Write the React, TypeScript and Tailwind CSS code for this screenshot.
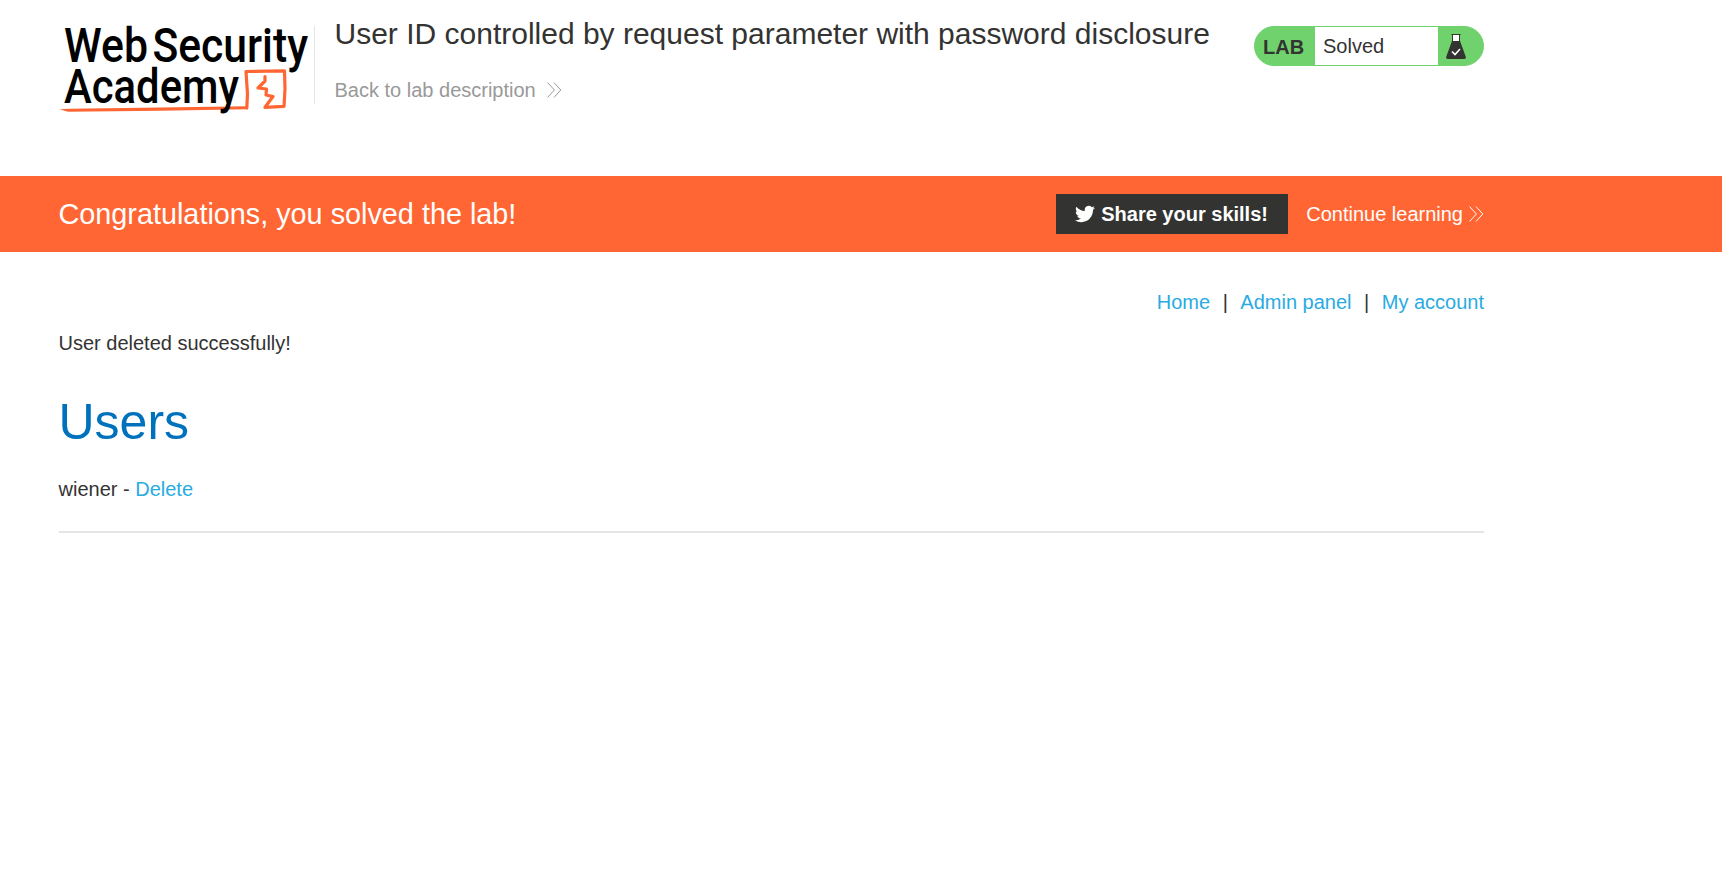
import React from "react";

function Chevrons({ className }: { className: string }) {
  return (
    <svg width="15" height="16" viewBox="0 0 15 16" fill="none" stroke="currentColor" strokeWidth="1" className={className}>
      <path d="M0.6 0.6 L7.4 8 L0.6 15.4 M7 0.6 L13.8 8 L7 15.4" />
    </svg>
  );
}

function Logo() {
  return (
    <svg width="255" height="112" viewBox="59 4 255 112" className="shrink-0" role="img">
      <g fill="#000" fontFamily="Roboto, sans-serif" fontWeight="500" fontSize="48">
        <text x="64" y="62" textLength="84" lengthAdjust="spacingAndGlyphs">Web</text>
        <text x="152.500" y="62" textLength="155.500" lengthAdjust="spacingAndGlyphs">Security</text>
      </g>
      <g fill="none" stroke="#ff6633" strokeLinejoin="round" strokeLinecap="round">
        <path d="M246.800 108 L247.500 94 L246 71.500 L284.500 70.800 L285 89 L284 106.300 L265 107.300 L273 96.500 L266 95 L266.500 89 L258 88 L265 81 L265 76.500" strokeWidth="3.200" />
      </g>
      <path d="M59.500 109.200 L70 108.700 L160 107.600 L246 106.300 L248 109.300 L160 110.800 L68 111.800 Z" fill="#ff6633" />
      <text x="64" y="103" textLength="175" lengthAdjust="spacingAndGlyphs" fill="#000" fontFamily="Roboto, sans-serif" fontWeight="500" fontSize="48">Academy</text>
    </svg>
  );
}

function Flask() {
  return (
    <svg width="20" height="26" viewBox="0 0 20 26">
      <path d="M7 1 H13 V9 H7 Z" fill="#fff" />
      <path d="M5.500 0.500 H14.500 M6.500 0.500 V8 M13.500 0.500 V8" stroke="#333332" strokeWidth="1" fill="none" />
      <path d="M6 7 H14 L19.700 22.500 Q20.300 25 18 25 H2 Q-0.300 25 0.300 22.500 Z" fill="#333332" />
      <path d="M6 17.500 L9 20.500 L14 15" stroke="#fff" strokeWidth="1.600" fill="none" />
    </svg>
  );
}

function Twitter() {
  return (
    <svg width="20" height="20" viewBox="0 0 24 24" fill="#fff">
      <path d="M23.953 4.570a10 10 0 01-2.825.775 4.958 4.958 0 002.163-2.723c-.951.555-2.005.959-3.127 1.184a4.920 4.920 0 00-8.384 4.482C7.690 8.095 4.067 6.130 1.640 3.162a4.822 4.822 0 00-.666 2.475c0 1.710.870 3.213 2.188 4.096a4.904 4.904 0 01-2.228-.616v.060a4.923 4.923 0 003.946 4.827 4.996 4.996 0 01-2.212.085 4.936 4.936 0 004.604 3.417 9.867 9.867 0 01-6.102 2.105c-.390 0-.779-.023-1.170-.067a13.995 13.995 0 007.557 2.209c9.053 0 13.998-7.496 13.998-13.985 0-.210 0-.420-.015-.630A9.935 9.935 0 0024 4.590z" />
    </svg>
  );
}

export default function App() {
  return (
    <div className="min-h-[893px] w-full bg-white font-['Liberation_Sans',Arial,sans-serif] text-[20px] leading-6 text-[#333332]">
      <header className="flex h-44 items-start pl-[59px]">
        <div className="flex pt-1">
          <Logo />
          <div className="mt-[22px] h-[78px] w-px bg-[#e5e5e5]" />
        </div>
        <div className="ml-[19.5px] w-[919.5px] pt-4">
          <h2 className="whitespace-nowrap text-[30px] leading-9">User ID controlled by request parameter with password disclosure</h2>
          <a className="mt-[26px] flex items-center whitespace-nowrap text-[#999998]">
            Back to lab description
            <Chevrons className="ml-[11px]" />
          </a>
        </div>
        <div className="mt-[26px] flex h-10 w-[230px] items-stretch overflow-hidden rounded-[20px] border border-[#70d26d] bg-[#70d26d]">
          <div className="flex w-[60px] items-center pl-2 pt-0.5 font-bold">LAB</div>
          <div className="flex w-[123px] items-center bg-white pl-2">Solved</div>
          <div className="flex items-start pl-2 pt-[7px]"><Flask /></div>
        </div>
      </header>

      <section className="h-[76px] bg-[#ff6633] text-white">
        <div className="ml-[58.5px] flex h-full w-[1425.5px] items-center">
          <p className="grow text-[28.8px] leading-9">Congratulations, you solved the lab!</p>
          <a className="flex h-10 w-[232px] items-center whitespace-nowrap bg-[#333332] pl-[19px] font-bold">
            <Twitter />
            <span className="ml-[6px]">Share your skills!</span>
          </a>
          <a className="ml-[18px] flex items-center whitespace-nowrap">
            Continue learning
            <Chevrons className="ml-[6px]" />
          </a>
        </div>
      </section>

      <main className="ml-[58.5px] w-[1425.5px]">
        <nav className="flex justify-end pt-[38px]">
          <a className="text-[#29abe2]">Home</a>
          <span className="mx-[12.5px]">|</span>
          <a className="text-[#29abe2]">Admin panel</a>
          <span className="mx-[12.5px]">|</span>
          <a className="text-[#29abe2]">My account</a>
        </nav>
        <p className="mt-[17px]">User deleted successfully!</p>
        <h1 className="mt-[37px] text-[50px] leading-[60px] text-[#0071bc]">Users</h1>
        <p className="mt-[25px]">
          wiener - <a className="text-[#29abe2]">Delete</a>
        </p>
        <hr className="mt-[30px] border-0 border-t-2 border-[#e5e5e5]" />
      </main>
    </div>
  );
}
